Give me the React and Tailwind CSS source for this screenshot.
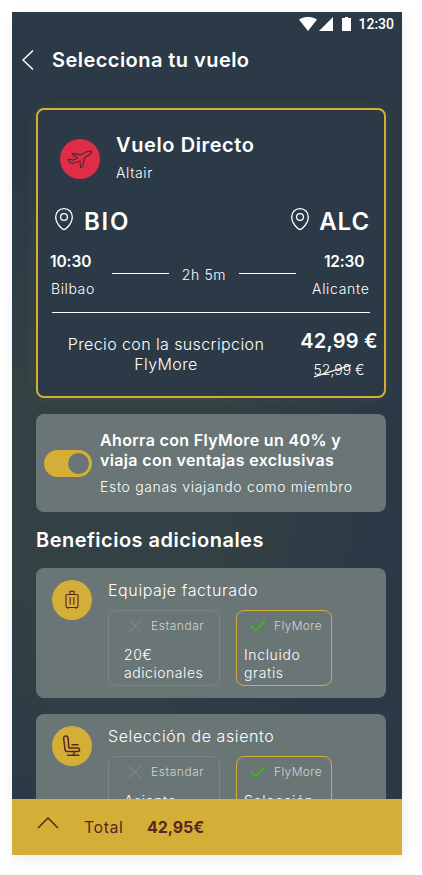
import React, { useState } from "react";

const benefits = [
  { id: "luggage", title: "Equipaje facturado", standard: ["20€", "adicionales"], flymore: ["Incluido", "gratis"] },
  { id: "seat", title: "Selección de asiento", standard: ["Asiento", "aleatorio"], flymore: ["Selección", "gratis"] },
];

function StatusBar() {
  return (
    <div className="flex h-6 shrink-0 items-center justify-end pr-2 text-white">
      <svg width="18" height="14" viewBox="0 0 18 14" fill="currentColor">
        <path d="M0 2.6C5 -.9 13 -.9 18 2.6L9 14z" />
      </svg>
      <svg width="14" height="14" viewBox="0 0 14 14" fill="currentColor" className="ml-[2px]">
        <path d="M14 0v14H0z" />
      </svg>
      <svg width="9" height="14" viewBox="0 0 9 14" fill="currentColor" className="ml-[9px]">
        <path d="M3 0h3v1h3v13H0V1h3z" />
      </svg>
      <span className="ml-[7px] font-[Roboto] text-[14px] font-medium leading-6">12:30</span>
    </div>
  );
}

function PinIcon() {
  return (
    <svg width="20" height="24" viewBox="0 0 20 24" fill="none" stroke="#fff" strokeWidth="1.3">
      <path d="M10 1.600c-4.900 0-8.300 3.600-8.300 8.300 0 4.800 3.300 8.900 5.900 11.400 1.400 1.400 3.400 1.400 4.800 0 2.600-2.500 5.900-6.600 5.900-11.400 0-4.700-3.400-8.300-8.300-8.300z" />
      <circle cx="10" cy="10" r="3.400" />
    </svg>
  );
}

function PlaneIcon() {
  return (
    <svg width="26" height="20" viewBox="0 0 26 20" fill="none" stroke="#4b2a20" strokeWidth="1.1" strokeLinejoin="round" strokeLinecap="round">
      <path d="M1 10.800l1.700-.600 3.100 1.100 4.700-2.400-5.500-3.600 1.500-.700 8 1.200 3.400-2.200c2.300-1.300 4.500-1.700 7-1.200-.2 1.700-1.700 2.800-3.400 3.900l-3.900 2.400-2 8.400-2 1.500-.6-6.700-4.200 1.700c-2.300.9-4.700.7-6-.400z" />
    </svg>
  );
}

function LuggageIcon() {
  return (
    <svg width="14" height="20" viewBox="0 0 14 20" fill="none" stroke="#5a2622" strokeWidth="1.100">
      <rect x="1" y="4.500" width="12" height="13" rx="1.300" />
      <path d="M5 4.500V1.400h4v3.100M5.200 7.200v7.600M8.800 7.200v7.600M3 17.500v1.500M11 17.500v1.500" />
    </svg>
  );
}

function SeatIcon() {
  return (
    <svg width="20" height="24" viewBox="0 0 20 24" fill="none" stroke="#5a2622" strokeWidth="1.500" strokeLinecap="round" strokeLinejoin="round">
      <path d="M6.800 13.700L6.100 4.200C5.900 1.300 1.600 1.100 1.600 4.100L3 15.300c.2 1.500 1 2.200 2.400 2.200h10.100c2.800 0 2.800-3.500 0-3.500H8.300c-1 0-1.400-.1-1.500-.9M10 10.800h6M12.500 17.500l-1.100 3.200M5.600 21.200h11.200" />
    </svg>
  );
}

function CrossIcon() {
  return (
    <svg width="12" height="12" viewBox="0 0 12 12" stroke="#808c8d" strokeWidth="1" fill="none">
      <path d="M0 0l12 12M12 0L0 12" />
    </svg>
  );
}

function CheckIcon() {
  return (
    <svg width="16" height="12" viewBox="0 0 16 12" stroke="#43b02a" strokeWidth="2" fill="none">
      <path d="M.7 5.500l5 4.900L15.300.9" />
    </svg>
  );
}

function FlightCard() {
  return (
    <section className="flex h-[290px] shrink-0 flex-col rounded-lg border-2 border-[#d4af37] bg-[#2b3a46] shadow-[0_0_14px_rgba(212,175,55,0.09)]">
      <div className="flex h-[92px] items-center gap-4 pl-[22px] pt-[4px]">
        <div className="mt-[1px] grid h-10 w-10 place-items-center rounded-full bg-[#df2c49]">
          <PlaneIcon />
        </div>
        <div className="pt-[2px]">
          <h2 className="text-[20px] font-semibold leading-7 tracking-[0.600px]">Vuelo Directo</h2>
          <p className="text-[14px] font-light leading-7 tracking-[0.600px]">Altair</p>
        </div>
      </div>

      <div className="flex h-10 items-center justify-between pl-4 pr-[14px]">
        <div className="flex items-center gap-[10px]">
          <div className="-mt-[6px]"><PinIcon /></div>
          <span className="text-[24px] font-semibold tracking-[1.800px]">BIO</span>
        </div>
        <div className="flex items-center gap-[9px]">
          <div className="-mt-[6px]"><PinIcon /></div>
          <span className="text-[24px] font-semibold tracking-[0.900px]">ALC</span>
        </div>
      </div>

      <div className="mx-[14px] flex h-[71px] justify-between border-b border-white">
        <div className="-ml-[2px] w-[46px] pt-[9px]">
          <p className="text-[15.500px] font-semibold leading-[22px] tracking-[-0.100px]">10:30</p>
          <p className="mt-[5px] pl-px text-[14px] font-light leading-[22px] tracking-[0.600px]">Bilbao</p>
        </div>
        <div className="flex h-[62px] items-center">
          <div className="h-px w-[57px] bg-white" />
          <span className="w-[70px] pt-[2px] text-center text-[14px] font-light tracking-[0.600px]">2h 5m</span>
          <div className="h-px w-[57px] bg-white" />
        </div>
        <div className="w-[58px] pt-[9px]">
          <p className="ml-3 text-[15.500px] font-semibold leading-[22px] tracking-[-0.200px]">12:30</p>
          <p className="mt-[5px] text-[14px] font-light leading-[22px] tracking-[0.700px]">Alicante</p>
        </div>
      </div>

      <div className="flex pl-[22px] pr-[2px] pt-[14px]">
        <p className="w-[212px] pt-[7px] text-center text-[16px] font-light leading-5 tracking-[0.400px]">
          Precio con la suscripcion
          <br />
          FlyMore
        </p>
        <div className="ml-auto flex w-[86px] flex-col items-center">
          <p className="whitespace-nowrap text-[20px] font-semibold leading-7 tracking-[0.200px]">42,99 €</p>
          <div className="relative mt-[2px] text-[14px] font-light leading-[26px]">
            52,99 €
            <svg className="absolute left-0 top-[7px]" width="37" height="14" viewBox="0 0 37 14" stroke="#fff" strokeWidth="1.200">
              <path d="M0 13L37 1" />
            </svg>
          </div>
        </div>
      </div>
    </section>
  );
}

function FlyMoreBanner() {
  const [active, setActive] = useState(true);
  return (
    <section className="mt-4 flex h-[98px] shrink-0 items-center gap-2 rounded-lg bg-[#6a7576] pl-2">
      <button
        onClick={() => setActive(!active)}
        className={`flex h-[27px] w-12 items-center rounded-full bg-[#d4af37] px-[3px] ${active ? "justify-end" : "justify-start"}`}
        aria-label="FlyMore"
      >
        <span className="h-[21px] w-[21px] rounded-full bg-[#6a7576]" />
      </button>
      <div className="whitespace-nowrap pt-px">
        <h3 className="text-[16px] font-semibold leading-5 tracking-[0.350px]">
          Ahorra con FlyMore un 40% y
          <br />
          viaja con ventajas exclusivas
        </h3>
        <p className="mt-[6px] text-[14px] font-light leading-[22px] tracking-[0.660px]">Esto ganas viajando como miembro</p>
      </div>
    </section>
  );
}

function BenefitCard({ item }) {
  return (
    <section className="flex h-[130px] shrink-0 gap-4 rounded-lg bg-[#6a7576] pl-4 pt-3">
      <div className="grid h-10 w-10 place-items-center rounded-full bg-[#d4af37]">
        {item.id === "luggage" ? <LuggageIcon /> : <SeatIcon />}
      </div>
      <div>
        <h3 className="text-[16px] font-light leading-5 tracking-[0.600px]">{item.title}</h3>
        <div className="mt-[10px] flex gap-4">
          <div className="h-[76px] w-28 rounded-lg border border-[#7b8687]">
            <div className="flex h-[30px] items-center gap-[10px] pl-5">
              <CrossIcon />
              <span className="text-[12px] font-light tracking-[0.550px] text-[#d0d4d5]">Estandar</span>
            </div>
            <p className="mt-[5px] pl-[15px] text-[14px] font-light leading-[18px] tracking-[0.550px]">
              {item.standard[0]}
              <br />
              {item.standard[1]}
            </p>
          </div>
          <div className="h-[76px] w-24 rounded-lg border border-[#d4af37]">
            <div className="flex h-[30px] items-center gap-2 pl-[13px]">
              <CheckIcon />
              <span className="text-[12px] font-light tracking-[0.350px] text-[#d0d4d5]">FlyMore</span>
            </div>
            <p className="mt-[5px] pl-[7px] text-[14px] font-light leading-[18px] tracking-[0.650px]">
              {item.flymore[0]}
              <br />
              {item.flymore[1]}
            </p>
          </div>
        </div>
      </div>
    </section>
  );
}

export default function App() {
  return (
    <div className="h-[875px] w-[422px] overflow-hidden bg-white pl-3 pt-3 font-[Inter,sans-serif] text-white">
      <div className="flex h-[843px] w-[390px] flex-col bg-[#2b3a46] bg-[radial-gradient(ellipse_260px_330px_at_25%_56%,#344244_0%,#334144_45%,#2b3a46_100%)] shadow-[2px_4px_14px_rgba(0,0,0,0.07)]">
        <StatusBar />
        <header className="flex h-12 shrink-0 items-center gap-[18px] pl-[10px]">
          <svg width="12" height="20" viewBox="0 0 12 20" fill="none" stroke="#fff" strokeWidth="1.500">
            <path d="M11 .5L1 10l10 9.500" />
          </svg>
          <h1 className="text-[20px] font-semibold tracking-[0.450px]">Selecciona tu vuelo</h1>
        </header>

        <main className="flex min-h-0 flex-1 flex-col overflow-hidden px-6 pr-4 pt-6">
          <FlightCard />
          <FlyMoreBanner />
          <h2 className="my-[14px] shrink-0 text-[20px] font-semibold leading-7 tracking-[0.480px]">Beneficios adicionales</h2>
          <div className="flex flex-col gap-4">
            {benefits.map((item) => (
              <BenefitCard key={item.id} item={item} />
            ))}
          </div>
        </main>

        <footer className="flex h-14 shrink-0 items-center bg-[#d4af37] pl-[25px] text-[#5a2622]">
          <svg width="22" height="12" viewBox="0 0 22 12" fill="none" stroke="currentColor" strokeWidth="1.500" className="-mt-2">
            <path d="M1 11L11 1l10 10" />
          </svg>
          <span className="ml-[25px] w-[63px] text-[16px] tracking-[0.500px]">Total</span>
          <span className="text-[16px] font-bold tracking-[-0.100px]">42,95€</span>
        </footer>
      </div>
    </div>
  );
}
